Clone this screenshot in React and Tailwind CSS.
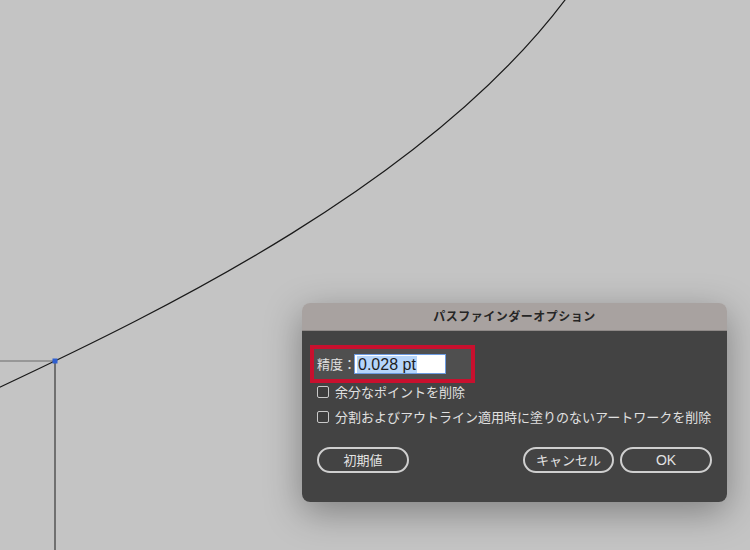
import React from 'react';

const font = { fontFamily: '"Liberation Sans", "Noto Sans CJK JP", sans-serif' };

const Checkbox = ({ label }) => (
  <div className="flex items-center h-[18px] ml-[8px] gap-[6px]">
    <span className="w-[12px] h-[12px] border border-[#c9c9c9] rounded-[2px] bg-[#3d3d3d]" />
    <span className="text-[13px] text-[#e0e0e0] leading-none">{label}</span>
  </div>
);

const PillButton = ({ children, width }) => (
  <button
    className={`h-[26px] ${width} rounded-full border-2 border-[#cfcfcf] text-[13px] text-[#e2e2e2] flex items-center justify-center leading-none`}
  >
    {children}
  </button>
);

const App = () => {
  return (
    <div className="relative w-[750px] h-[550px] bg-[#c4c4c4] overflow-hidden" style={font}>
      {/* artboard path */}
      <svg className="absolute inset-0" width="750" height="550" viewBox="0 0 750 550">
        <line x1="0" y1="361" x2="55" y2="361" stroke="#6a6a6a" strokeWidth="1" />
        <line x1="55" y1="361" x2="55" y2="550" stroke="#707070" strokeWidth="2" />
        <path d="M -4 389 C 160 312, 430 182, 568 -4" fill="none" stroke="#1a1a1a" strokeWidth="1.2" />
        <rect x="52.5" y="358.5" width="5" height="5" fill="#2f5fd0" />
      </svg>

      {/* dialog */}
      <div className="absolute left-[302px] top-[303px] w-[425px] h-[199px] rounded-[8px] overflow-hidden flex flex-col shadow-[0_10px_36px_rgba(0,0,0,0.35)]">
        <div className="h-[28px] bg-[#a8a2a0] border-b border-[#8f8a88] flex items-center justify-center">
          <span className="text-[12px] font-bold text-[#262626] tracking-[0.5px]">パスファインダーオプション</span>
        </div>
        <div className="flex-1 bg-[#434343] pl-[8px] pt-[14px]">
          <div className="w-[165px] h-[38px] border-4 border-[#c8102e] bg-[#4f4f4f] flex items-center pl-[3px]">
            <span className="text-[13px] text-[#e0e0e0] leading-none">精度：</span>
            <div className="-ml-[2px] w-[92px] h-[20px] bg-white border border-[#6d9be0] flex items-center pl-[2px]">
              <span className="bg-[#b5d5fb] text-[16px] text-[#1e1e1e] leading-[17px] px-[1px]">0.028 pt</span>
            </div>
          </div>
          <div className="-ml-[1px]">
            <Checkbox label="余分なポイントを削除" />
            <div className="mt-[7px]">
              <Checkbox label="分割およびアウトライン適用時に塗りのないアートワークを削除" />
            </div>
          </div>
          <div className="mt-[21px] flex items-center ml-[7px] pr-[15px]">
            <PillButton width="w-[92px]">初期値</PillButton>
            <div className="flex-1" />
            <PillButton width="w-[91px]">キャンセル</PillButton>
            <div className="w-[6px]" />
            <PillButton width="w-[92px]">
              <span className="text-[14px]">OK</span>
            </PillButton>
          </div>
        </div>
      </div>
    </div>
  );
};

export default App;
